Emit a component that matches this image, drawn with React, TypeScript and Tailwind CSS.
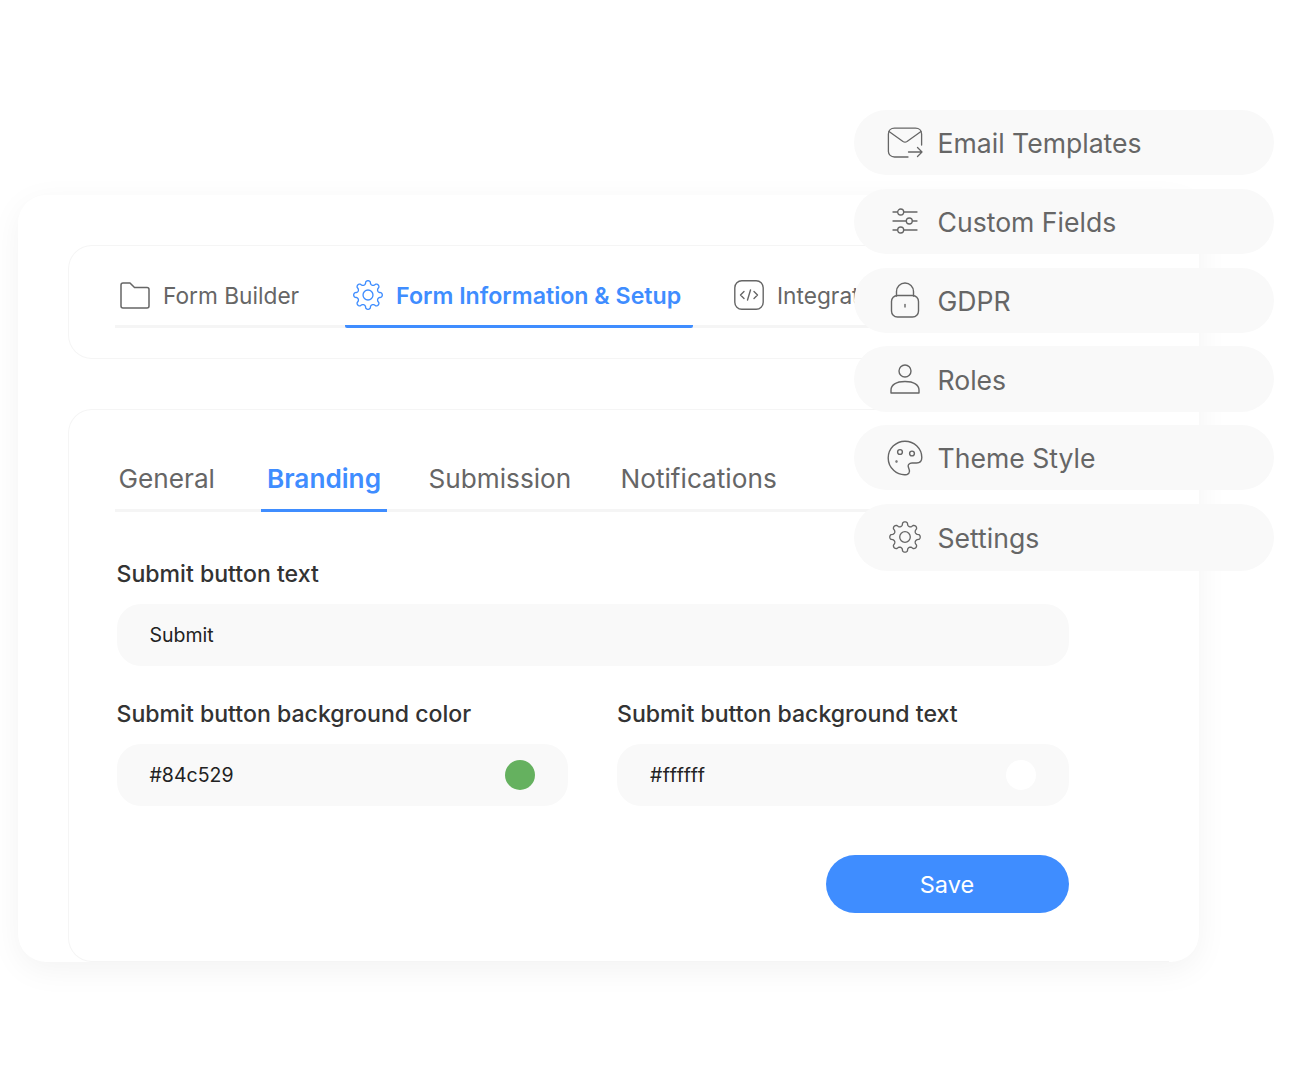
const stroke = "#666666";

// 8 tooth gear outline, sampled around the centre of a 36 box
function gearPath() {
  const pts: string[] = [];
  for (let i = 0; i < 144; i++) {
    const t = (i / 144) * Math.PI * 2;
    const c = Math.cos(8 * t);
    const r = 14 + 2.1 * Math.sign(c) * Math.pow(Math.abs(c), 0.5);
    pts.push(`${(18 + r * Math.sin(t)).toFixed(2)} ${(18 - r * Math.cos(t)).toFixed(2)}`);
  }
  return `M${pts.join("L")}Z`;
}

function GearIcon({ size, color, width }: { size: number; color: string; width: number }) {
  return (
    <svg width={size} height={size} viewBox="0 0 36 36" fill="none" stroke={color} strokeWidth={width} strokeLinejoin="round">
      <path d={gearPath()} />
      <circle cx="18" cy="18" r="5.6" />
    </svg>
  );
}

function MailIcon() {
  return (
    <svg width="36" height="32" viewBox="0 0 36 32" fill="none" stroke={stroke} strokeWidth="1.3" strokeLinecap="round" strokeLinejoin="round">
      <path d="M21 30H7.5C4 30 1.4 27.5 1.4 24.5V7C1.4 3.5 4 1.2 7.5 1.2H28.5C32 1.2 34.6 3.5 34.6 7V18" />
      <path d="M2 4.5L16 14.5C17.2 15.3 18.8 15.3 20 14.5L34 4.5" />
      <path d="M21.5 25H35M30.5 20.5L35 25L30.5 29.5" />
    </svg>
  );
}

function SlidersIcon() {
  return (
    <svg width="26" height="26" viewBox="0 0 26 26" fill="none" stroke={stroke} strokeWidth="1.3" strokeLinecap="round">
      <path d="M1 4H5.5M12 4H25" />
      <circle cx="8.7" cy="4" r="3" />
      <path d="M1 13H14M20.5 13H25" />
      <circle cx="17.3" cy="13" r="3" />
      <path d="M1 22H5.5M12 22H25" />
      <circle cx="8.7" cy="22" r="3" />
    </svg>
  );
}

function LockIcon() {
  return (
    <svg width="30" height="36" viewBox="0 0 30 36" fill="none" stroke={stroke} strokeWidth="1.4" strokeLinecap="round">
      <path d="M6.5 14V9.5C6.5 4.8 10.3 1 15 1C19.7 1 23.5 4.8 23.5 9.5V14" />
      <path d="M1.5 19.5C1.5 16.2 4 13.5 7.5 13.5H22.5C26 13.5 28.5 16.2 28.5 19.5V29C28.5 32.3 26 35 22.5 35H7.5C4 35 1.5 32.3 1.5 29Z" />
      <path d="M15 22.5V25" />
    </svg>
  );
}

function UserIcon() {
  return (
    <svg width="30" height="30" viewBox="0 0 30 30" fill="none" stroke={stroke} strokeWidth="1.4" strokeLinejoin="round">
      <circle cx="15" cy="7" r="6" />
      <path d="M1 29V26C1 21 6 17.5 15 17.5C24 17.5 29 21 29 26V29Z" />
    </svg>
  );
}

function PaletteIcon() {
  return (
    <svg width="36" height="36" viewBox="0 0 36 36" fill="none" stroke={stroke} strokeWidth="1.4" strokeLinecap="round" strokeLinejoin="round">
      <path d="M20 34.5C10 36 1.2 28 1.2 18C1.2 8.7 8.7 1.2 18 1.2C27.3 1.2 34.8 8.7 34.8 17.5C34.8 21 32.5 23 29.5 23H25C22 23 20.5 25 21.5 27.5C22.5 30 23.5 33.5 20 34.5Z" />
      <circle cx="13" cy="12" r="2.4" />
      <circle cx="25" cy="13.5" r="2.4" />
      <circle cx="9.5" cy="21.5" r="0.5" />
    </svg>
  );
}

function FolderIcon() {
  return (
    <svg width="30" height="27" viewBox="0 0 30 27" fill="none" stroke={stroke} strokeWidth="1.5" strokeLinejoin="round">
      <path d="M1 3C1 1.8 1.8 1 3 1H10L14.5 5.5H27C28.2 5.5 29 6.3 29 7.5V24C29 25.2 28.2 26 27 26H3C1.8 26 1 25.2 1 24Z" />
    </svg>
  );
}

function CodeIcon() {
  return (
    <svg width="30" height="30" viewBox="0 0 30 30" fill="none" stroke={stroke} strokeWidth="1.4" strokeLinecap="round" strokeLinejoin="round">
      <rect x="0.8" y="0.8" width="28.4" height="28.4" rx="7" />
      <path d="M10 11.5L6.5 15L10 18.5M20 11.5L23.5 15L20 18.5M16.5 10L13.5 20" />
    </svg>
  );
}

const menu = [
  { label: "Email Templates", icon: <MailIcon />, tall: false },
  { label: "Custom Fields", icon: <SlidersIcon />, tall: false },
  { label: "GDPR", icon: <LockIcon />, tall: false },
  { label: "Roles", icon: <UserIcon />, tall: false },
  { label: "Theme Style", icon: <PaletteIcon />, tall: false },
  { label: "Settings", icon: <GearIcon size={34} color={stroke} width={1.4} />, tall: true },
];

export default function App() {
  return (
    <div className="relative w-[1290px] h-[1074px] overflow-hidden bg-white pt-[195px] pl-[18px] font-['Inter',sans-serif]">
      <div className="w-[1181px] h-[767px] rounded-[28px] bg-white shadow-[0_8px_32px_rgba(0,0,0,0.05)] pt-[50px] pl-[50px] pr-[30px] flex flex-col gap-[50px]">
        <div className="h-[114px] rounded-l-[24px] border border-r-0 border-[#f5f5f5] pt-[16px] pl-[46px]">
          <div className="flex h-[66px] border-b-[3px] border-[#f5f5f5]">
            <div className="flex items-center gap-[13px] pl-[5px] w-[230px] h-[66px] py-[3px] shrink-0">
              <FolderIcon />
              <span className="pt-[2px] text-[22.7px] text-[#666666]">Form Builder</span>
            </div>
            <div className="flex items-center gap-[12px] pl-[7px] w-[348px] h-[66px] pt-[3px] border-b-[3px] border-[#3f8dff] rounded-b-[2px] shrink-0">
              <GearIcon size={32} color="#3f8dff" width={1.5} />
              <span className="pt-[2px] text-[23.2px] font-semibold text-[#3f8dff] whitespace-nowrap">Form Information &amp; Setup</span>
            </div>
            <div className="flex items-center gap-[13px] pl-[41px] h-[66px] py-[3px]">
              <CodeIcon />
              <span className="pt-[2px] text-[22.7px] text-[#666666]">Integrations</span>
            </div>
          </div>
        </div>

        <div className="flex-1 rounded-l-[24px] border border-r-0 border-[#f5f5f5] pl-[47.5px] pt-[46px]">
          <div className="flex h-[56px] border-b-[3px] border-[#f5f5f5] -ml-[1.5px] text-[26.2px] text-[#666666]">
            <div className="h-[56px] w-[146px] pl-[3.5px] pb-[11px] flex items-center">General</div>
            <div className="h-[56px] w-[126px] pb-[8px] flex items-center justify-center border-b-[3px] border-[#3f8dff] font-semibold text-[#3f8dff]">Branding</div>
            <div className="h-[56px] w-[192px] pl-[41.5px] pb-[11px] flex items-center">Submission</div>
            <div className="h-[56px] pl-[41.5px] pb-[11px] flex items-center">Notifications</div>
          </div>

          <div className="mt-[47px] w-[952px]">
            <label className="block text-[23.1px] font-[450] leading-[30px] text-[#333333]">Submit button text</label>
            <div className="mt-[15px] h-[62px] rounded-[24px] bg-[#f9f9f9] pl-[33px] pt-[2px] flex items-center text-[19.5px] text-[#222222]">Submit</div>

            <div className="mt-[33px] grid grid-cols-2 gap-x-[49px]">
              <div>
                <label className="block text-[23.1px] font-[450] leading-[30px] text-[#333333]">Submit button background color</label>
                <div className="mt-[15px] h-[62px] rounded-[24px] bg-[#f9f9f9] px-[33px] flex items-center justify-between text-[19.5px] text-[#222222]">
                  <span className="pt-[2px]">#84c529</span>
                  <span className="w-[30px] h-[30px] rounded-full bg-[#65b15f]" />
                </div>
              </div>
              <div>
                <label className="block text-[23.1px] font-[450] leading-[30px] text-[#333333]">Submit button background text</label>
                <div className="mt-[15px] h-[62px] rounded-[24px] bg-[#f9f9f9] px-[33px] flex items-center justify-between text-[19.5px] text-[#222222]">
                  <span className="pt-[2px] tracking-[0.5px]">#ffffff</span>
                  <span className="w-[30px] h-[30px] rounded-full bg-white" />
                </div>
              </div>
            </div>

            <div className="mt-[49px] flex justify-end">
              <button className="w-[243px] h-[58px] pt-[2px] rounded-full bg-[#3f8dff] text-white text-[23.5px]">Save</button>
            </div>
          </div>
        </div>
      </div>

      {/* floating menu over the card */}
      <div className="absolute left-[854px] top-[110px] w-[420px] flex flex-col gap-[13.5px]">
        {menu.map((item) => (
          <div key={item.label} className={`${item.tall ? "h-[67px]" : "h-[65.3px]"} rounded-full bg-[#f9f9f9] flex items-center`}>
            <div className="w-[37px] ml-[32px] mr-[14.5px] flex justify-center shrink-0">{item.icon}</div>
            <span className="pt-[3px] text-[26.6px] text-[#666666]">{item.label}</span>
          </div>
        ))}
      </div>
    </div>
  );
}
